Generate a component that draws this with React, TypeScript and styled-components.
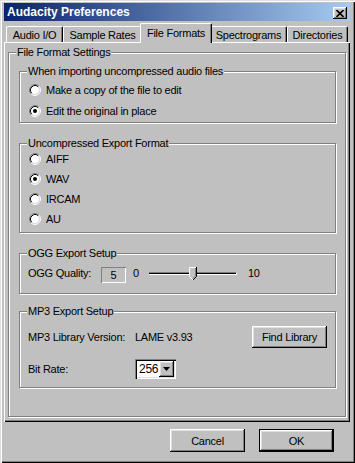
import React from "react";
import styled, { createGlobalStyle } from "styled-components";

const FACE = "#c0c0c0";
const LIGHT = "#dfdfdf";
const SHADOW = "#808080";
const DARK = "#000000";

const GlobalStyle = createGlobalStyle`
  html, body {
    margin: 0;
    padding: 0;
    background: ${FACE};
  }
  body {
    font-family: "Liberation Sans", Arial, sans-serif;
    font-size: 11px;
    letter-spacing: -0.25px;
    color: #000;
  }
  * {
    box-sizing: border-box;
  }
`;

const raised = `
  box-shadow: inset -1px -1px ${DARK}, inset 1px 1px #fff,
    inset -2px -2px ${SHADOW}, inset 2px 2px ${LIGHT};
`;

const Window = styled.div`
  width: 355px;
  height: 463px;
  padding: 3px 5px 4px 4px;
  display: flex;
  flex-direction: column;
  background: ${FACE};
  box-shadow: inset 1px 1px ${LIGHT}, inset 2px 2px #fff,
    inset -1px -1px ${DARK}, inset -2px -2px ${SHADOW};
`;

const TitleBar = styled.div`
  height: 18px;
  display: flex;
  align-items: center;
  justify-content: space-between;
  padding: 0 3px 0 3px;
  background: linear-gradient(to right, #0a246a, #a6caf0);
`;

const TitleText = styled.span`
  color: #fff;
  font-weight: bold;
  font-size: 12px;
  letter-spacing: 0;
`;

const CloseButton = styled.div`
  width: 14px;
  height: 12px;
  margin-top: 2px;
  display: flex;
  align-items: center;
  justify-content: center;
  background: ${FACE};
  ${raised}
`;

const TabStrip = styled.div`
  height: 19px;
  margin-top: 2px;
  padding-left: 2px;
  display: flex;
  align-items: flex-end;
`;

const Tab = styled.div<{ $w: number; $active?: boolean }>`
  position: relative;
  width: ${(p) => p.$w + (p.$active ? 4 : 0)}px;
  height: ${(p) => (p.$active ? 20 : 16)}px;
  margin: 0 ${(p) => (p.$active ? -2 : 0)}px ${(p) => (p.$active ? -1 : 0)}px;
  z-index: ${(p) => (p.$active ? 1 : 0)};
  display: flex;
  align-items: center;
  justify-content: center;
  padding-bottom: ${(p) => (p.$active ? 2 : 0)}px;
  background: ${FACE};
  border-top: 1px solid #fff;
  border-left: 1px solid #fff;
  border-right: 1px solid ${DARK};
  border-radius: 2px 2px 0 0;
  box-shadow: inset -1px 0 ${SHADOW};
  white-space: nowrap;
`;

const Panel = styled.div`
  width: 346px;
  height: 380px;
  padding: 4px 4px 5px 4px;
  display: flex;
  flex-direction: column;
  box-shadow: inset 1px 1px #fff, inset -1px -1px ${DARK},
    inset -2px -2px ${SHADOW};
`;

const Group = styled.fieldset<{ $pt: number; $pb: number; $pl: number; $pr: number; $mt?: number; $fill?: boolean }>`
  margin: ${(p) => p.$mt ?? 0}px 0 0;
  padding: ${(p) => p.$pt}px ${(p) => p.$pr}px ${(p) => p.$pb}px ${(p) => p.$pl}px;
  border: 1px solid ${SHADOW};
  box-shadow: inset 1px 1px #fff, 1px 1px #fff;
  min-width: 0;
  flex: ${(p) => (p.$fill ? 1 : "none")};
  display: flex;
  flex-direction: column;
`;

const Legend = styled.legend<{ $x: number }>`
  margin-left: ${(p) => p.$x}px;
  padding: 0 1px;
  line-height: 12px;
  background: ${FACE};
`;

const Row = styled.div<{ $h: number; $mt?: number; $pl?: number }>`
  height: ${(p) => p.$h}px;
  margin-top: ${(p) => p.$mt ?? 0}px;
  padding-left: ${(p) => p.$pl ?? 0}px;
  display: flex;
  align-items: center;
  white-space: nowrap;
`;

const Label = styled.span<{ $w?: number; $ml?: number }>`
  width: ${(p) => (p.$w ? `${p.$w}px` : "auto")};
  margin-left: ${(p) => p.$ml ?? 0}px;
  flex-shrink: 0;
`;

const RadioText = styled.span`
  margin-left: 5px;
`;

const ValueBox = styled.div`
  width: 25px;
  height: 16px;
  margin-top: 4px;
  display: flex;
  align-items: center;
  justify-content: center;
  box-shadow: inset 1px 1px ${SHADOW}, inset -1px -1px #fff;
`;

const Slider = styled.div`
  position: relative;
  width: 88px;
  height: 13px;
`;

const Channel = styled.div`
  margin-top: 5px;
  height: 3px;
  background: ${DARK};
  border-top: 1px solid ${SHADOW};
  border-bottom: 1px solid #fff;
  border-right: 1px solid #fff;
`;

const Thumb = styled.svg`
  position: absolute;
  top: 0;
`;

const Spacer = styled.div`
  flex: 1;
`;

const Button = styled.button<{ $w: number; $h: number; $default?: boolean }>`
  width: ${(p) => p.$w}px;
  height: ${(p) => p.$h}px;
  padding: 0;
  font: inherit;
  letter-spacing: inherit;
  color: #000;
  background: ${FACE};
  border: ${(p) => (p.$default ? `1px solid ${DARK}` : "none")};
  ${raised}
`;

const Combo = styled.div`
  width: 41px;
  height: 20px;
  padding: 2px;
  display: flex;
  align-items: center;
  background: #fff;
  box-shadow: inset 1px 1px ${SHADOW}, inset 2px 2px ${DARK},
    inset -1px -1px #fff, inset -2px -2px ${LIGHT};
`;

const ComboText = styled.span`
  flex: 1;
  padding-left: 2px;
  font-size: 12px;
`;

const ComboArrow = styled.div`
  width: 15px;
  height: 16px;
  display: flex;
  align-items: center;
  justify-content: center;
  background: ${FACE};
  ${raised}
`;

const Footer = styled.div`
  margin-top: 7px;
  padding-right: 16px;
  display: flex;
  justify-content: flex-end;
  gap: 14px;
`;

const RadioMark = ({ checked }: { checked?: boolean }) => (
  <svg width="12" height="12" viewBox="0 0 12 12">
    <circle cx="6" cy="6" r="4.5" fill="#fff" />
    <path d="M2.11 9.89A5.5 5.5 0 0 1 9.89 2.11" fill="none" stroke={SHADOW} />
    <path d="M9.89 2.11A5.5 5.5 0 0 1 2.11 9.89" fill="none" stroke="#fff" />
    <path d="M2.82 9.18A4.5 4.5 0 0 1 9.18 2.82" fill="none" stroke={DARK} />
    <path d="M9.18 2.82A4.5 4.5 0 0 1 2.82 9.18" fill="none" stroke={LIGHT} />
    {checked && <circle cx="6" cy="6" r="2" fill={DARK} />}
  </svg>
);

const Radio = ({ label, checked }: { label: string; checked?: boolean }) => (
  <>
    <RadioMark checked={checked} />
    <RadioText>{label}</RadioText>
  </>
);

const tabs = [
  { name: "Audio I/O", w: 57 },
  { name: "Sample Rates", w: 79 },
  { name: "File Formats", w: 68, active: true },
  { name: "Spectrograms", w: 77 },
  { name: "Directories", w: 61 },
];

const exportFormats = ["AIFF", "WAV", "IRCAM", "AU"];

export default function App() {
  const quality = 5;
  return (
    <>
      <GlobalStyle />
      <Window>
        <TitleBar>
          <TitleText>Audacity Preferences</TitleText>
          <CloseButton>
            <svg width="8" height="7" viewBox="0 0 8 7">
              <path d="M0.5 0L7.5 7M7.5 0L0.5 7" stroke={DARK} strokeWidth="1.6" />
            </svg>
          </CloseButton>
        </TitleBar>

        <TabStrip>
          {tabs.map((t) => (
            <Tab key={t.name} $w={t.w} $active={t.active}>
              {t.name}
            </Tab>
          ))}
        </TabStrip>

        <Panel>
          <Group $fill $pt={7} $pb={0} $pl={10} $pr={9}>
            <Legend $x={-3}>File Format Settings</Legend>

            <Group $pt={2} $pb={1} $pl={8} $pr={8}>
              <Legend $x={-1}>When importing uncompressed audio files</Legend>
              <Row $h={21} $pl={1}>
                <Radio label="Make a copy of the file to edit" />
              </Row>
              <Row $h={21} $pl={1}>
                <Radio label="Edit the original in place" checked />
              </Row>
            </Group>

            <Group $mt={14} $pt={0} $pb={3} $pl={8} $pr={8}>
              <Legend $x={-1}>Uncompressed Export Format</Legend>
              {exportFormats.map((f) => (
                <Row key={f} $h={20} $pl={1}>
                  <Radio label={f} checked={f === "WAV"} />
                </Row>
              ))}
            </Group>

            <Group $mt={14} $pt={4} $pb={10} $pl={8} $pr={8}>
              <Legend $x={-1}>OGG Export Setup</Legend>
              <Row $h={20}>
                <Label $w={73}>OGG Quality:</Label>
                <ValueBox>{quality}</ValueBox>
                <Label $w={16} $ml={7}>0</Label>
                <Slider>
                  <Channel />
                  <Thumb
                    width="8"
                    height="13"
                    viewBox="0 0 8 13"
                    style={{ left: `calc(${quality * 10}% - 4px)` }}
                  >
                    <path d="M0 0H8V9L4 13L0 9Z" fill={FACE} />
                    <path d="M0.5 9.5V0.5H7" fill="none" stroke="#fff" />
                    <path d="M0.5 9.5L4 13" fill="none" stroke="#fff" />
                    <path d="M7.5 0V9.5L4 13" fill="none" stroke={DARK} />
                    <path d="M6.5 1V9L4 11.5" fill="none" stroke={SHADOW} />
                  </Thumb>
                </Slider>
                <Label $ml={11}>10</Label>
              </Row>
            </Group>

            <Group $mt={11} $pt={9} $pb={8} $pl={8} $pr={8}>
              <Legend $x={-1}>MP3 Export Setup</Legend>
              <Row $h={22}>
                <Label $w={107}>MP3 Library Version:</Label>
                <Label>LAME v3.93</Label>
                <Spacer />
                <Button $w={75} $h={22}>Find Library</Button>
              </Row>
              <Row $h={20} $mt={11}>
                <Label $w={107}>Bit Rate:</Label>
                <Combo>
                  <ComboText>256</ComboText>
                  <ComboArrow>
                    <svg width="7" height="4" viewBox="0 0 7 4">
                      <path d="M0 0H7L3.5 4Z" fill={DARK} />
                    </svg>
                  </ComboArrow>
                </Combo>
              </Row>
            </Group>
          </Group>
        </Panel>

        <Footer>
          <Button $w={75} $h={23}>Cancel</Button>
          <Button $w={75} $h={23} $default>OK</Button>
        </Footer>
      </Window>
    </>
  );
}
